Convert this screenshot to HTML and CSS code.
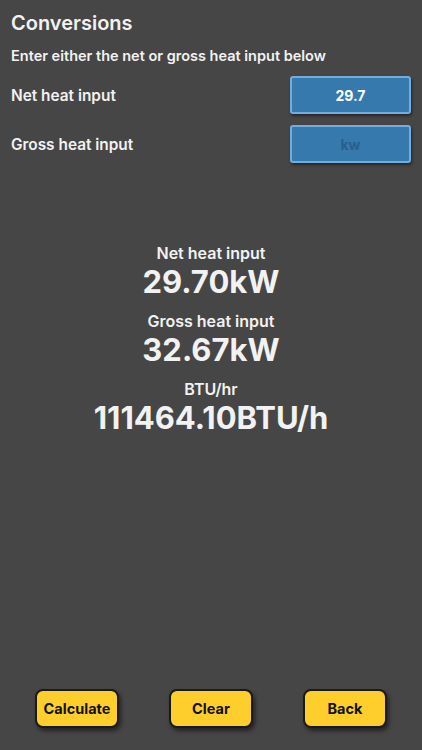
FILE: index.html
```html
<!DOCTYPE html>
<html lang="en">
<head>
    <meta charset="UTF-8">
    <meta name="viewport" content="width=device-width, initial-scale=1.0">
    <title>Conversions</title>
    <link rel="stylesheet" href="styles.css">
</head>
<body>
    <div id="conversions">
        <h1>Conversions</h1>
        <p class="intro">Enter either the net or gross heat input below</p>

        <div class="field-row">
            <label for="net-input">Net heat input</label>
            <input type="text" id="net-input" value="29.7">
        </div>
        <div class="field-row">
            <label for="gross-input">Gross heat input</label>
            <input type="text" id="gross-input" placeholder="kw">
        </div>

        <div class="results">
            <div class="result-label">Net heat input</div>
            <div class="result-value">29.70kW</div>
            <div class="result-label">Gross heat input</div>
            <div class="result-value">32.67kW</div>
            <div class="result-label">BTU/hr</div>
            <div class="result-value">111464.10BTU/h</div>
        </div>

        <div class="actions">
            <button class="action-button">Calculate</button>
            <button class="action-button">Clear</button>
            <button class="action-button">Back</button>
        </div>
    </div>
</body>
</html>
```

FILE: styles.css
```css
body {
    margin: 0;
    padding: 0;
    background-color: #464646;
    font-family: 'Inter', 'Liberation Sans', sans-serif;
    color: #f2f2f2;
}

#conversions {
    height: 750px;
    display: flex;
    flex-direction: column;
    padding: 0 11px;
    box-sizing: border-box;
}

h1 {
    font-size: 20px;
    font-weight: 600;
    margin: 10px 0 0;
    line-height: 26px;
}

.intro {
    font-size: 14.5px;
    font-weight: 600;
    margin: 11px 0 0;
    line-height: 18px;
}

.field-row {
    display: flex;
    justify-content: space-between;
    align-items: center;
    margin-top: 11px;
}

label {
    font-size: 15.4px;
    font-weight: 600;
}

input {
    width: 121px;
    height: 38px;
    box-sizing: border-box;
    background-color: #3579ad;
    border: 2px solid #72ace0;
    border-radius: 3px;
    box-shadow: 1px 2px 3px rgba(0, 0, 0, 0.45);
    color: #fff;
    font-family: inherit;
    font-size: 14px;
    font-weight: 700;
    text-align: center;
    outline: none;
}

input::placeholder {
    color: #2a5e8b;
}

.results {
    margin-top: 80px;
    text-align: center;
}

.result-label {
    font-size: 16px;
    font-weight: 600;
    line-height: 20px;
}

.result-value {
    font-size: 31px;
    font-weight: 700;
    line-height: 38px;
    margin-bottom: 10px;
}

.actions {
    margin-top: auto;
    margin-bottom: 22px;
    display: flex;
    justify-content: space-between;
    padding: 0 24px;
}

.action-button {
    width: 84px;
    height: 39px;
    background-color: #fecf2c;
    border: 2px solid #1a1a1a;
    border-radius: 8px;
    box-shadow: 2px 3px 4px rgba(0, 0, 0, 0.5);
    color: #111;
    font-family: inherit;
    font-size: 14.5px;
    font-weight: 700;
    padding: 0;
    cursor: pointer;
}
```
